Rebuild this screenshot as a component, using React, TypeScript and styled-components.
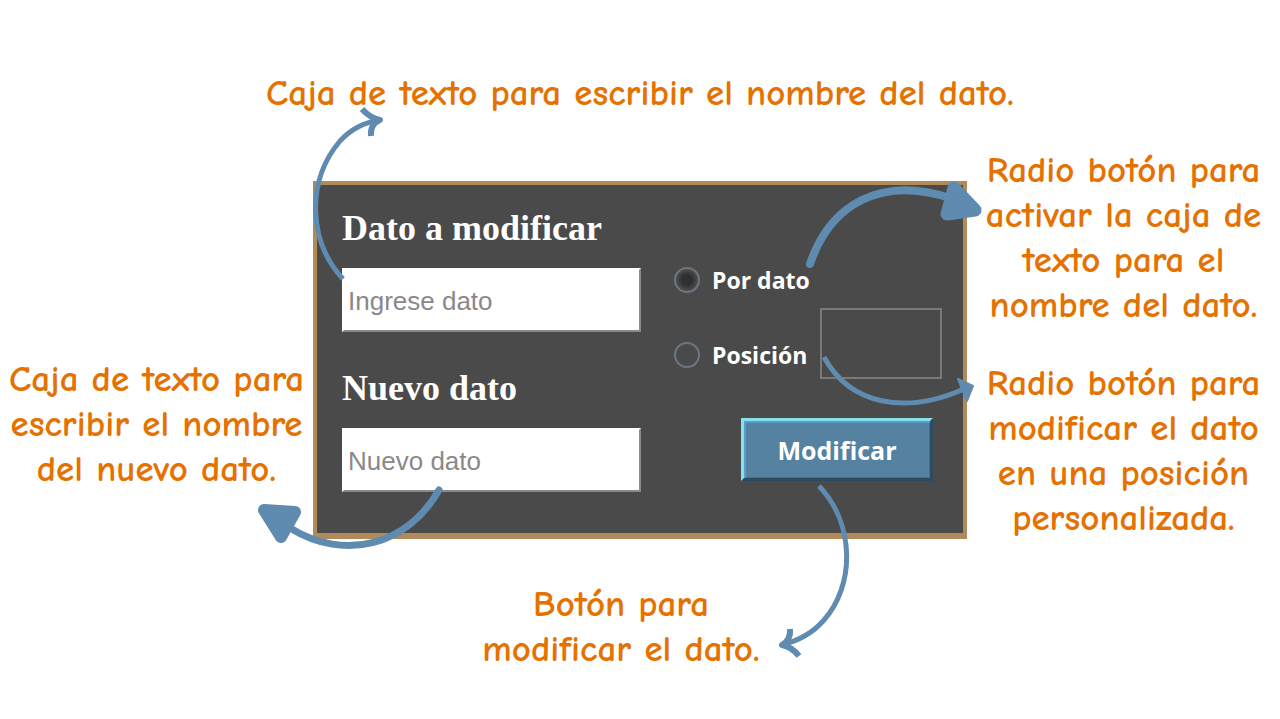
import React from "react";
import styled, { createGlobalStyle } from "styled-components";

const GlobalStyle = createGlobalStyle`
  *, *::before, *::after { box-sizing: border-box; }
  body { margin: 0; background: #ffffff; }
`;

const Page = styled.main`
  position: relative;
  display: grid;
  grid-template-columns: minmax(0, 1fr) 654px minmax(0, 1fr);
  padding: 71px 0 47px;
`;

const Note = styled.p`
  margin: 0;
  color: #e57200;
  font-family: "Comic Sans MS", "Comic Neue", Lato, sans-serif;
  font-size: 37px;
  font-weight: 700;
  font-feature-settings: "liga" 0, "clig" 0, "dlig" 0, "calt" 0;
  line-height: 45px;
  text-align: center;
  white-space: nowrap;
`;

const Line = styled.span`
  display: block;
`;

const TopNote = styled(Note)`
  grid-column: 1 / -1;
  margin-bottom: 32px;
`;

const LeftNotes = styled.aside`
  align-self: end;
  padding-bottom: 49px;
`;

const RightNotes = styled.aside`
  display: flex;
  flex-direction: column;
  gap: 33px;
`;

const BottomNote = styled(Note)`
  grid-column: 2;
  margin-top: 41px;
  padding-right: 38px;
`;

const Panel = styled.form`
  align-self: start;
  display: grid;
  grid-template-columns: minmax(0, 1fr) 268px;
  gap: 33px;
  margin-top: 33px;
  padding: 23px 21px 41px 25px;
  background: #4a4a4a;
  border: 4px solid #b08a58;
  border-bottom-width: 6px;
`;

const Fields = styled.div`
  display: flex;
  flex-direction: column;
  gap: 36px;
`;

const Field = styled.div`
  display: flex;
  flex-direction: column;
  gap: 20px;
`;

const FieldLabel = styled.label`
  color: #ffffff;
  font-family: Georgia, "Liberation Serif", serif;
  font-size: 36px;
  font-weight: 700;
  line-height: 40px;
  white-space: nowrap;
`;

const TextBox = styled.input`
  width: 100%;
  height: 64px;
  padding: 3px 4px 0;
  background: #ffffff;
  border: 2px solid #ffffff;
  border-right-color: #8a8a8a;
  border-bottom-color: #8a8a8a;
  color: #333333;
  font-family: "Liberation Sans", Arial, sans-serif;
  font-size: 26px;
  &::placeholder { color: #8b8888; opacity: 1; }
`;

const Controls = styled.div`
  display: flex;
  flex-direction: column;
  align-items: flex-end;
  gap: 39px;
  padding-top: 57px;
`;

const Choice = styled.div`
  display: flex;
  align-items: flex-end;
  justify-content: space-between;
  width: 100%;
`;

const Options = styled.div`
  display: flex;
  flex-direction: column;
  gap: 45px;
  padding-bottom: 9px;
`;

const Option = styled.label`
  display: flex;
  align-items: center;
  gap: 12px;
  color: #ffffff;
  font-family: "Open Sans", "Noto Sans", sans-serif;
  font-size: 23px;
  font-weight: 700;
  line-height: 30px;
  white-space: nowrap;
`;

const Radio = styled.input`
  appearance: none;
  flex: none;
  width: 26px;
  height: 26px;
  margin: 0;
  border: 2px solid #6b7783;
  border-radius: 50%;
  &:checked {
    background: radial-gradient(circle, #303030 0 5px, #4a4a4a 10px);
  }
`;

const PositionBox = styled.input`
  width: 122px;
  height: 71px;
  padding: 4px 8px;
  background: transparent;
  border: 2px solid #7a7a7a;
  color: #ffffff;
  font-family: "Liberation Sans", Arial, sans-serif;
  font-size: 26px;
`;

const SubmitButton = styled.button`
  width: 192px;
  height: 63px;
  margin-right: 9px;
  padding: 0;
  background: #5482a0;
  border: 3px solid;
  border-color: #86e0ee #2d4a60 #2d4a60 #86e0ee;
  box-shadow: inset 2px 2px 0 #5c9cc8, inset -1px -1px 0 #44708e;
  color: #ffffff;
  font-family: "Open Sans", "Noto Sans", sans-serif;
  font-size: 25px;
  font-weight: 700;
`;

const Arrows = styled.svg`
  position: absolute;
  top: 0;
  left: 50%;
  transform: translateX(-50%);
  pointer-events: none;
`;

function Lines({ text }: { text: string[] }) {
  return (
    <>
      {text.map((line) => (
        <Line key={line}>{line}</Line>
      ))}
    </>
  );
}

export default function App() {
  return (
    <>
      <GlobalStyle />
      <Page>
        <TopNote>Caja de texto para escribir el nombre del dato.</TopNote>

        <LeftNotes>
          <Note>
            <Lines text={["Caja de texto para", "escribir el nombre", "del nuevo dato."]} />
          </Note>
        </LeftNotes>

        <Panel onSubmit={(event) => event.preventDefault()}>
          <Fields>
            <Field>
              <FieldLabel htmlFor="current">Dato a modificar</FieldLabel>
              <TextBox id="current" type="text" placeholder="Ingrese dato" />
            </Field>
            <Field>
              <FieldLabel htmlFor="next">Nuevo dato</FieldLabel>
              <TextBox id="next" type="text" placeholder="Nuevo dato" />
            </Field>
          </Fields>
          <Controls>
            <Choice>
              <Options>
                <Option>
                  <Radio type="radio" name="mode" value="dato" defaultChecked />
                  Por dato
                </Option>
                <Option>
                  <Radio type="radio" name="mode" value="posicion" />
                  Posición
                </Option>
              </Options>
              <PositionBox type="text" aria-label="Posición" />
            </Choice>
            <SubmitButton type="submit">Modificar</SubmitButton>
          </Controls>
        </Panel>

        <RightNotes>
          <Note>
            <Lines text={["Radio botón para", "activar la caja de", "texto para el", "nombre del dato."]} />
          </Note>
          <Note>
            <Lines text={["Radio botón para", "modificar el dato", "en una posición", "personalizada."]} />
          </Note>
        </RightNotes>

        <BottomNote>
          <Lines text={["Botón para", "modificar el dato."]} />
        </BottomNote>

        <Arrows width="1280" height="719" viewBox="0 0 1280 719" fill="none" stroke="#5f8bb0" aria-hidden="true">
          <g strokeWidth="5">
            <path d="M343 279C307 240 307 180 340 141C352 128 366 122 380 120" />
            <path d="M362 109Q370 118 380 120Q370 124 371 136" strokeWidth="6" strokeLinejoin="round" />
            <path d="M819 486C855 524 855 585 824 620C812 634 798 641 781 645" />
            <path d="M790 629Q791 640 782 645Q792 647 799 656" strokeWidth="6" strokeLinejoin="round" />
          </g>
          <path d="M810 264C830 205 880 175 950 198" strokeWidth="8" strokeLinecap="round" />
          <path d="M954 188L975 210L947 214Z" fill="#5f8bb0" strokeWidth="13" strokeLinejoin="round" />
          <path d="M824 357C850 405 905 415 964 389" strokeWidth="5" />
          <path d="M958 379L973 386L967 401Z" fill="#5f8bb0" strokeWidth="2" strokeLinejoin="round" />
          <path d="M439 490C408 545 345 562 290 528" strokeWidth="7" strokeLinecap="round" />
          <path d="M264 510L295 512L281 537Z" fill="#5f8bb0" strokeWidth="12" strokeLinejoin="round" />
        </Arrows>
      </Page>
    </>
  );
}
